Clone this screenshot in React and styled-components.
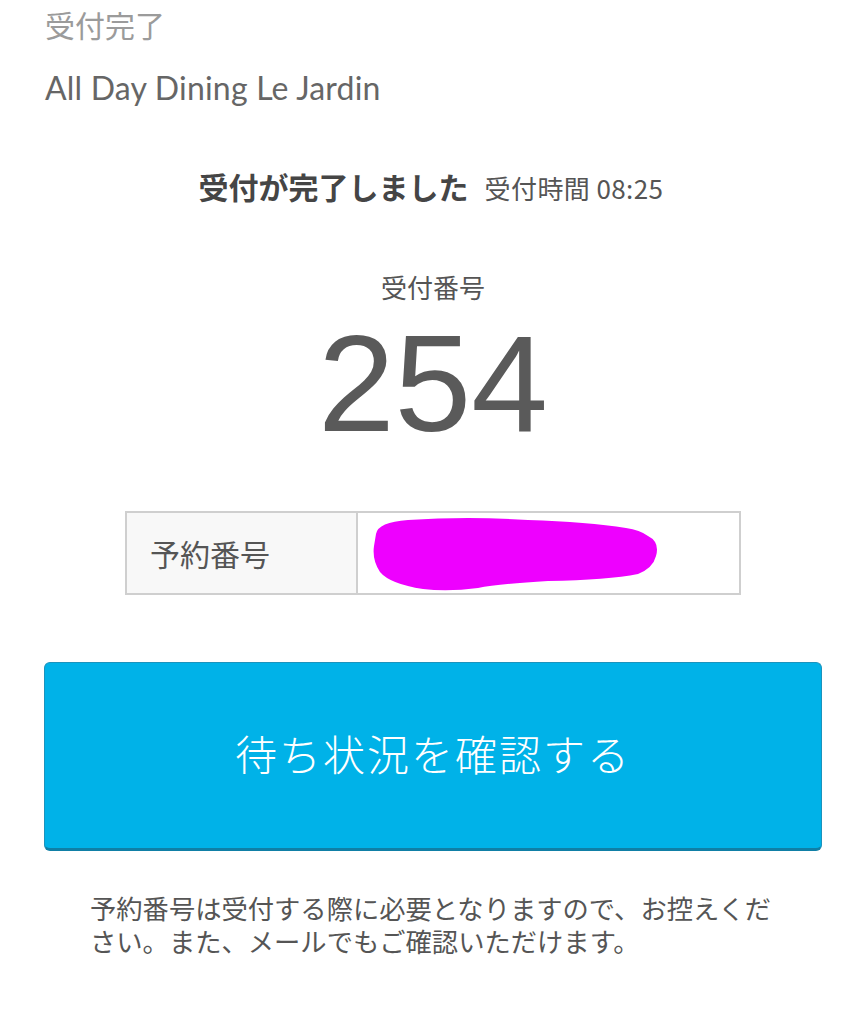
import React from "react";
import styled, { createGlobalStyle } from "styled-components";

const Global = createGlobalStyle`
  html, body { margin: 0; padding: 0; background: #ffffff; }
  body { font-family: "Noto Sans CJK JP", "Noto Sans", sans-serif; }
`;

const JP = `"Noto Sans CJK JP", "Noto Sans", sans-serif`;

const Page = styled.div`
  width: 867px;
  box-sizing: border-box;
  padding: 0 45px 60px 44px;
`;

const Title = styled.h1`
  margin: 4px 0 0 1px;
  font-family: ${JP};
  font-weight: 400;
  font-size: 30px;
  line-height: 40px;
  color: #9b9b9b;
`;

const Venue = styled.div`
  margin: 24px 0 0 1px;
  font-family: Lato, "Noto Sans", sans-serif;
  font-size: 32px;
  line-height: 40px;
  color: #666666;
  letter-spacing: 0.2px;
`;

const StatusRow = styled.div`
  margin-top: 58px;
  display: flex;
  justify-content: center;
  align-items: baseline;
  gap: 16px;
  padding-right: 4px;
`;

const StatusMain = styled.span`
  font-family: ${JP};
  font-weight: 700;
  font-size: 30px;
  line-height: 40px;
  color: #454545;
`;

const StatusTime = styled.span`
  font-family: ${JP};
  font-size: 26px;
  letter-spacing: 0.4px;
  color: #555555;
`;

const NumLabel = styled.div`
  margin-top: 64px;
  text-align: center;
  font-family: ${JP};
  font-size: 26px;
  line-height: 34px;
  color: #555555;
`;

const BigNumber = styled.div`
  margin-top: 4px;
  text-align: center;
  font-family: "Liberation Sans", Arial, sans-serif;
  font-size: 138px;
  line-height: 150px;
  color: #5a5a5a;
`;

const Table = styled.div`
  width: 616px;
  margin: 53px auto 0;
  box-sizing: border-box;
  border: 2px solid #cfcfcf;
  display: grid;
  grid-template-columns: 231px 1fr;
  height: 84px;
`;

const HeadCell = styled.div`
  background: #f8f8f8;
  border-right: 2px solid #cfcfcf;
  display: flex;
  align-items: center;
  padding-left: 23px;
  font-family: ${JP};
  font-size: 30px;
  color: #555555;
`;

const ValueCell = styled.div`
  background: #ffffff;
  display: flex;
  align-items: center;
  padding-left: 10px;
`;

const Button = styled.button`
  display: flex;
  align-items: center;
  justify-content: center;
  width: 100%;
  height: 189px;
  margin-top: 67px;
  box-sizing: border-box;
  background: #00b2e8;
  border: 1px solid #1b93bd;
  border-bottom: 3px solid #0f7fa6;
  border-radius: 6px;
  color: #ffffff;
  font-family: ${JP};
  font-weight: 300;
  font-size: 42px;
  letter-spacing: 2px;
  padding: 0 0 6px 0;
  cursor: pointer;
`;

const Note = styled.p`
  width: 690px;
  margin: 40px 0 0 46px;
  font-family: ${JP};
  font-size: 26.3px;
  line-height: 33px;
  color: #555555;
`;

function Redaction() {
  return (
    <svg width="292" height="78" viewBox="0 0 292 78" aria-hidden="true">
      <path
        d="M8 20 Q10 8 40 6 Q100 2 160 6 Q220 8 258 14 Q272 16 280 22 Q292 28 288 42 Q285 54 270 60 Q240 66 180 67 Q130 70 110 74 Q80 78 55 75 Q22 70 12 58 Q4 46 6 32 Z"
        fill="#ee00ff"
      />
    </svg>
  );
}

export default function App() {
  return (
    <>
      <Global />
      <Page>
        <Title>受付完了</Title>
        <Venue>All Day Dining Le Jardin</Venue>
        <StatusRow>
          <StatusMain>受付が完了しました</StatusMain>
          <StatusTime>受付時間 08:25</StatusTime>
        </StatusRow>
        <NumLabel>受付番号</NumLabel>
        <BigNumber>254</BigNumber>
        <Table>
          <HeadCell>予約番号</HeadCell>
          <ValueCell>
            <Redaction />
          </ValueCell>
        </Table>
        <Button type="button">待ち状況を確認する</Button>
        <Note>
          予約番号は受付する際に必要となりますので、お控えください。また、メールでもご確認いただけます。
        </Note>
      </Page>
    </>
  );
}
